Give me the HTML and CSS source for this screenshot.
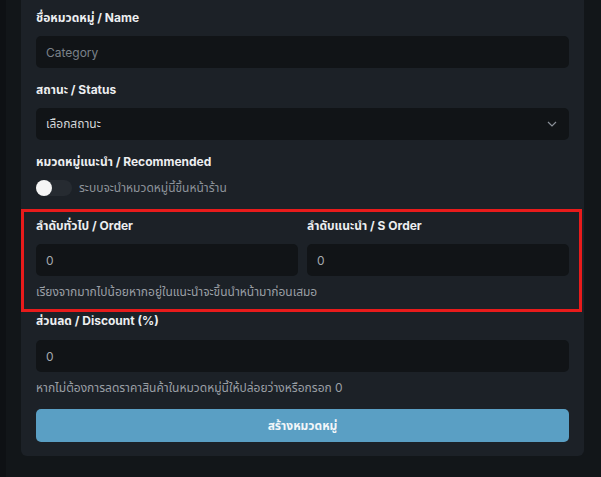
FILE: index.html
```html
<!DOCTYPE html>
<html lang="th">
<head>
  <meta charset="UTF-8">
  <meta name="viewport" content="width=device-width, initial-scale=1.0">
  <title>สร้างหมวดหมู่</title>
  <link rel="stylesheet" href="styles.css">
</head>
<body>
<div class="page">
  <form class="card">
    <div class="field">
      <label for="name">ชื่อหมวดหมู่ / Name</label>
      <input type="text" id="name" placeholder="Category">
    </div>

    <div class="field">
      <label for="status">สถานะ / Status</label>
      <div class="select">
        <span>เลือกสถานะ</span>
        <svg width="10" height="6" viewBox="0 0 10 6"><path d="M1 1l4 4 4-4" fill="none" stroke="#8a9098" stroke-width="1.2"/></svg>
      </div>
    </div>

    <div class="field field-toggle">
      <label>หมวดหมู่แนะนำ / Recommended</label>
      <div class="toggle-row">
        <span class="toggle"><span class="knob"></span></span>
        <span class="toggle-text">ระบบจะนำหมวดหมู่นี้ขึ้นหน้าร้าน</span>
      </div>
    </div>

    <div class="highlight">
      <div class="order-grid">
        <div>
          <label for="order">ลำดับทั่วไป / Order</label>
          <input type="text" id="order" value="0">
        </div>
        <div>
          <label for="sorder">ลำดับแนะนำ / S Order</label>
          <input type="text" id="sorder" value="0">
        </div>
      </div>
      <p class="hint">เรียงจากมากไปน้อยหากอยู่ในแนะนำจะขึ้นนำหน้ามาก่อนเสมอ</p>
    </div>

    <div class="field field-discount">
      <label for="discount">ส่วนลด / Discount (%)</label>
      <input type="text" id="discount" value="0">
      <p class="hint">หากไม่ต้องการลดราคาสินค้าในหมวดหมู่นี้ให้ปล่อยว่างหรือกรอก 0</p>
    </div>

    <button type="button">สร้างหมวดหมู่</button>
  </form>
</div>
</body>
</html>
```

FILE: styles.css
```css
* {
  margin: 0;
  padding: 0;
  box-sizing: border-box;
}

body {
  font-family: 'Inter', 'Noto Sans', 'Noto Sans Thai', sans-serif;
  font-size: 12px;
  background: #121619;
  color: #e6e8ea;
  border-left: 6px solid #0e1114;
  min-height: 100vh;
}

.page {
  padding: 0 17px 21px 15px;
}

.card {
  background: #1c2127;
  border-radius: 0 0 6px 6px;
  padding: 10px 15px 14px;
}

label {
  display: block;
  font-weight: 700;
  line-height: 16px;
  margin-bottom: 10px;
  color: #eceef0;
}

.field {
  margin-bottom: 14px;
}

input[type="text"],
.select {
  display: block;
  width: 100%;
  height: 32px;
  padding: 0 10px;
  background: #111417;
  border: none;
  border-radius: 5px;
  font: inherit;
  color: #a4a9ae;
  outline: none;
}

input::placeholder {
  color: #7b828a;
}

.select {
  display: flex;
  align-items: center;
  justify-content: space-between;
  padding-right: 12px;
  color: #d4d7da;
}

.field-toggle {
  margin-bottom: 13px;
}

.toggle-row {
  display: flex;
  align-items: center;
  gap: 7px;
  height: 16px;
}

.toggle {
  position: relative;
  width: 36px;
  height: 16px;
  border-radius: 8px;
  background: #262b31;
}

.knob {
  position: absolute;
  left: 0;
  top: 0;
  width: 16px;
  height: 16px;
  border-radius: 50%;
  background: #f5f5f5;
}

.toggle-text {
  color: #8d939a;
}

.highlight {
  margin: 0 -13px 1px -15px;
  border: 3px solid #e81b1b;
  padding: 6px 10px 9px 12px;
}

.order-grid {
  display: grid;
  grid-template-columns: 1fr 1fr;
  gap: 9px;
}

.hint {
  margin-top: 8px;
  line-height: 16px;
  color: #9a9fa5;
}

.field-discount {
  margin-bottom: 13px;
}

.field-discount label {
  margin-bottom: 11px;
}

.field-discount .hint {
  margin-top: 8px;
}

button {
  display: block;
  width: 100%;
  height: 33px;
  background: #5a9fc4;
  border: none;
  border-radius: 5px;
  font: inherit;
  font-weight: 700;
  color: #f2f6f9;
  cursor: pointer;
}
```
